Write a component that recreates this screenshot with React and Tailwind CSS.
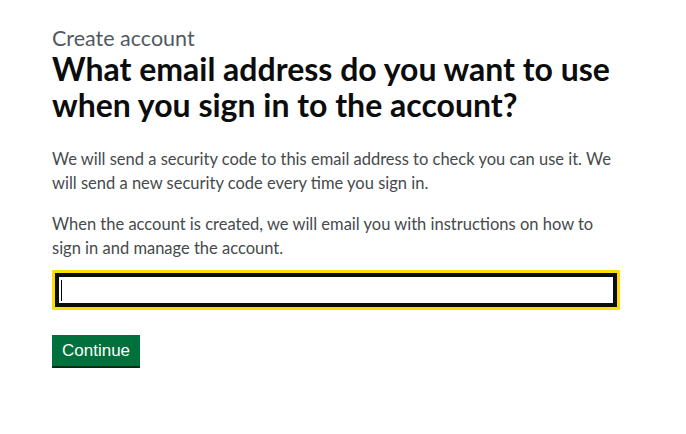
export default function App() {
  return (
    <div className="min-h-[434px] w-full bg-white">
      <div className="w-[620px] pl-[52px] pt-[25px] font-['Lato',sans-serif]">
        <span className="block text-[21.5px] leading-[26px] text-[#505a5f]">Create account</span>
        <h1 className="mt-0 text-[32px] font-bold leading-[36px] text-[#0b0c0c]">
          What email address do you want to use when you sign in to the account?
        </h1>
        <p className="mt-[24px] text-[16.5px] leading-[24px] text-[#454a4c]">
          We will send a security code to this email address to check you can use it. We will send a new security code every time you sign in.
        </p>
        <p className="mt-[17px] text-[16.5px] leading-[24px] text-[#454a4c]">
          When the account is created, we will email you with instructions on how to sign in and manage the account.
        </p>
        <div className="mt-[10px] w-[568px] border-[3px] border-[#ffdd00]">
          <div className="h-[34px] w-full border-[4px] border-[#0b0c0c] bg-white pl-[2px] pt-[3px]">
            <div className="h-[21px] w-[1px] bg-black"></div>
          </div>
        </div>
        <button className="mt-[25px] block h-[31px] bg-[#00703c] px-[10px] font-['Liberation_Sans',sans-serif] text-[17px] leading-[31px] text-white shadow-[0_2px_0_#002d18]">
          Continue
        </button>
      </div>
    </div>
  );
}
